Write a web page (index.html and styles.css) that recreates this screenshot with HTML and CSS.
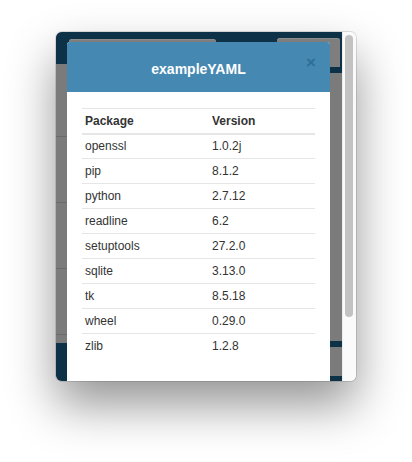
FILE: index.html
```html
<!DOCTYPE html>
<html>
<head>
<meta charset="utf-8">
<link rel="stylesheet" href="styles.css">
</head>
<body>
<div class="window">
  <div class="viewport">
    <div class="page">
      <div class="col col-left">
        <div class="bar bar-left"><div class="btn btn-left"></div></div>
        <div class="list">
          <div class="item item-first"></div>
          <div class="item"></div>
          <div class="item"></div>
          <div class="item"></div>
          <div class="item item-last"></div>
        </div>
        <div class="foot-left"></div>
      </div>
      <div class="col col-right">
        <div class="bar bar-right"><div class="btn btn-right"></div></div>
        <div class="area"></div>
        <div class="stripe"></div>
        <div class="area area-small"></div>
        <div class="foot-right"></div>
      </div>
    </div>
    <div class="modal">
      <div class="modal-header">
        <span class="modal-title">exampleYAML</span>
        <span class="close">&times;</span>
      </div>
      <div class="modal-body">
        <table class="pkg">
          <thead>
            <tr><th class="c1">Package</th><th>Version</th></tr>
          </thead>
          <tbody>
            <tr><td>openssl</td><td>1.0.2j</td></tr>
            <tr><td>pip</td><td>8.1.2</td></tr>
            <tr><td>python</td><td>2.7.12</td></tr>
            <tr><td>readline</td><td>6.2</td></tr>
            <tr><td>setuptools</td><td>27.2.0</td></tr>
            <tr><td>sqlite</td><td>3.13.0</td></tr>
            <tr><td>tk</td><td>8.5.18</td></tr>
            <tr><td>wheel</td><td>0.29.0</td></tr>
            <tr><td>zlib</td><td>1.2.8</td></tr>
          </tbody>
        </table>
      </div>
    </div>
  </div>
  <div class="scrollbar"><div class="thumb"></div></div>
</div>
</body>
</html>
```
FILE: styles.css
```css
html, body {
  margin: 0;
  padding: 0;
  background: #ffffff;
}
body {
  padding: 32px 0 0 56px;
  min-height: 462px;
  box-sizing: border-box;
  font-family: "Liberation Sans", Arial, sans-serif;
}
.window {
  width: 300px;
  height: 349px;
  border-radius: 6px;
  overflow: hidden;
  display: flex;
  box-shadow: 0 24px 48px rgba(0,0,0,0.42), 0 0 0 1px rgba(0,0,0,0.12);
}
.viewport {
  flex: 1;
  position: relative;
  overflow: hidden;
}
.page {
  display: grid;
  grid-template-columns: 174px 1fr;
  height: 100%;
  background: #7b7b7b;
}
.col {
  display: flex;
  flex-direction: column;
}
.bar {
  background: #0d3147;
  flex: none;
}
.bar-left {
  height: 32px;
  padding: 7px 0 0 13px;
  box-sizing: border-box;
}
.btn {
  background: #7e7e7e;
  border-radius: 3px 3px 0 0;
  box-shadow: inset 0 1px 0 #8c8c8c;
}
.btn-left {
  width: 147px;
  height: 25px;
}
.bar-right {
  height: 41px;
  padding: 6px 2px 0 0;
  box-sizing: border-box;
  display: flex;
  justify-content: flex-end;
}
.btn-right {
  width: 63px;
  height: 29px;
  border-radius: 3px 3px 0 0;
}
.list {
  flex: 1;
  display: flex;
  flex-direction: column;
}
.item {
  height: 65px;
  border-bottom: 1px solid #6a6a6a;
}
.item-first {
  height: 72px;
}
.item-last {
  height: 8px;
  border-bottom: none;
}
.foot-left {
  height: 40px;
  background: #0d3147;
}
.area {
  height: 268px;
}
.stripe {
  height: 6px;
  background: #0d3147;
}
.area-small {
  height: 29px;
}
.foot-right {
  flex: 1;
  background: #0d3147;
}
.modal {
  position: absolute;
  left: 11px;
  top: 10px;
  width: 263px;
  height: 360px;
  background: #ffffff;
  border-radius: 3px 3px 0 0;
  overflow: hidden;
}
.modal-header {
  height: 50px;
  background: #4589b2;
  display: flex;
  align-items: center;
  justify-content: center;
  position: relative;
}
.modal-title {
  color: #ffffff;
  font-weight: bold;
  font-size: 14px;
  margin-top: 3px;
}
.close {
  position: absolute;
  right: 14px;
  top: 12px;
  color: #2f6e95;
  font-weight: bold;
  font-size: 17px;
  line-height: 17px;
}
.modal-body {
  padding: 16px 15px 0 15px;
}
.pkg {
  width: 100%;
  border-collapse: collapse;
  font-size: 12px;
  color: #333333;
}
.pkg th, .pkg td {
  text-align: left;
  padding: 0 3px;
  height: 25px;
  box-sizing: border-box;
  border-top: 1px solid #e6e6e6;
  vertical-align: middle;
}
.pkg th {
  font-weight: bold;
  border-bottom: 2px solid #e6e6e6;
}
.pkg .c1 {
  width: 127px;
}
.scrollbar {
  width: 14px;
  flex: none;
  background: #fafafa;
  border-left: 1px solid #ececec;
  box-sizing: border-box;
  padding: 3px 0 0 2px;
}
.thumb {
  width: 8px;
  height: 282px;
  border-radius: 4px;
  background: #c2c2c2;
}
```
